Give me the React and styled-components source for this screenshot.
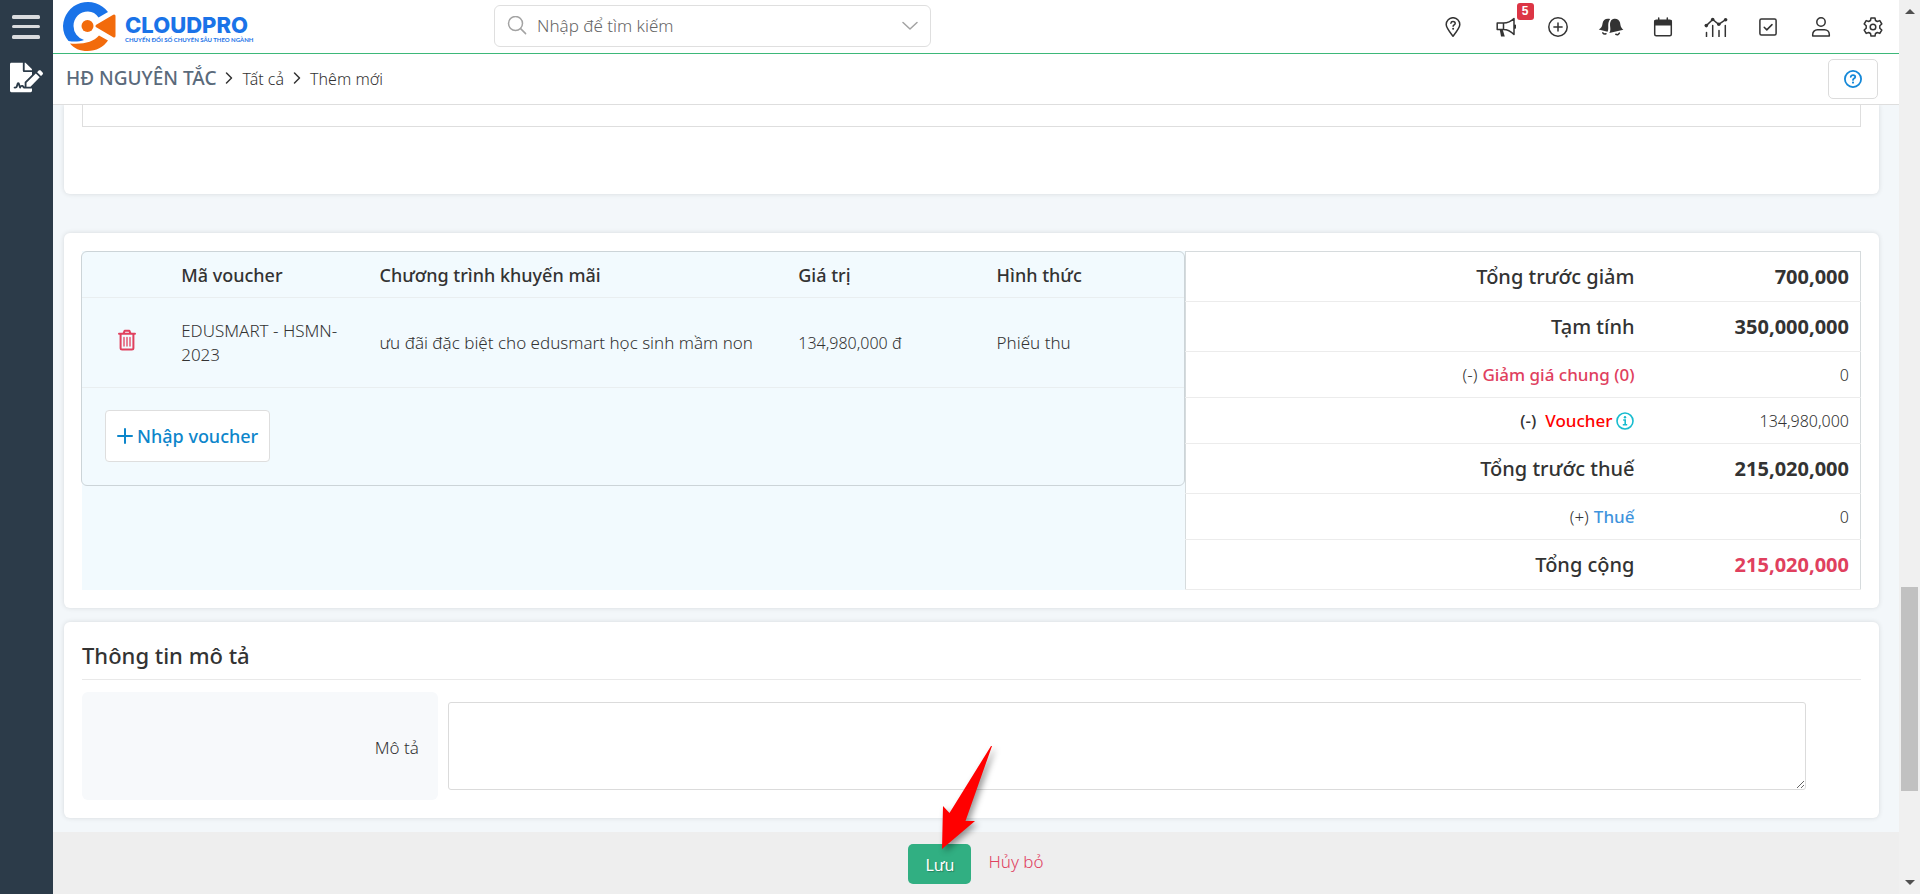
import React from 'react';
import styled, { createGlobalStyle } from 'styled-components';
import { FaFileSignature } from 'react-icons/fa';

const GlobalStyle = createGlobalStyle`
  *, *::before, *::after {
    box-sizing: border-box;
  }

  body {
    margin: 0;
    color: #333333;
    font-family: 'Noto Sans', 'Open Sans', sans-serif;
    font-size: 16px;
    line-height: 24px;
  }

  button, input, textarea {
    font: inherit;
  }

  a {
    text-decoration: none;
  }
`;

const Page = styled.div`
  display: flex;
  height: 100vh;
  overflow: hidden;
  background-color: #f3f7fa;
`;

const Sidebar = styled.nav`
  flex: 0 0 53px;
  display: flex;
  flex-direction: column;
  align-items: center;
  background-color: #2c3b49;
`;

const MenuButton = styled.button`
  display: flex;
  align-items: center;
  justify-content: center;
  width: 53px;
  height: 53px;
  padding: 0 1px 0 0;
  border: none;
  background: none;
  color: #d9dbde;
  cursor: pointer;
`;

const ModuleLink = styled.a`
  display: flex;
  justify-content: center;
  width: 53px;
  padding: 8px 0 0;
  color: #ffffff;
`;

const Main = styled.div`
  flex: 1;
  min-width: 0;
  display: flex;
  flex-direction: column;
`;

const Header = styled.header`
  flex: 0 0 54px;
  display: flex;
  align-items: center;
  background-color: #ffffff;
  border-bottom: 1px solid #3db879;
`;

const Logo = styled.a`
  flex: 0 0 441px;
  display: flex;
  align-items: center;
  gap: 9px;
  padding: 0 0 1px 9px;
  color: #1a73e8;
`;

const LogoText = styled.span`
  display: flex;
  flex-direction: column;
  padding-top: 6px;
`;

const LogoName = styled.span`
  font-family: Inter, sans-serif;
  font-size: 22px;
  line-height: 20px;
  font-weight: 800;
`;

const LogoSlogan = styled.span`
  font-family: Lato, sans-serif;
  font-size: 6px;
  line-height: 9px;
  font-weight: 700;
`;

const SearchBox = styled.label`
  flex: 0 1 437px;
  display: flex;
  align-items: center;
  height: 42px;
  padding: 0 12px;
  border: 1px solid #dfdfdf;
  border-radius: 6px;
  margin-bottom: 1px;
  color: #a3a3a3;
`;

const SearchInput = styled.input`
  flex: 1;
  min-width: 0;
  padding: 0 0 0 10px;
  border: none;
  outline: none;
  background: none;
  color: #333333;
  font-size: 17px;
  font-weight: 300;

  &::placeholder {
    color: #666666;
    opacity: 1;
  }
`;

const HeaderTools = styled.div`
  display: flex;
  justify-content: space-between;
  width: 448px;
  margin-left: auto;
  margin-right: 12px;
`;

const ToolButton = styled.button`
  position: relative;
  display: flex;
  align-items: center;
  justify-content: center;
  width: 28px;
  height: 28px;
  padding: 0;
  border: none;
  background: none;
  color: #333333;
  cursor: pointer;
`;

const Badge = styled.span`
  position: absolute;
  top: -10px;
  right: -14px;
  width: 17px;
  height: 17px;
  border-radius: 3px;
  background-color: #dc3545;
  color: #ffffff;
  font-family: 'Liberation Sans', Arial, sans-serif;
  font-size: 12px;
  line-height: 16px;
  font-weight: 700;
  text-align: center;
`;

const TitleBar = styled.div`
  flex: 0 0 51px;
  display: flex;
  align-items: center;
  justify-content: space-between;
  padding: 0 21px 0 13px;
  background-color: #ffffff;
  border-bottom: 1px solid #dedede;
`;

const Breadcrumb = styled.div`
  display: flex;
  align-items: center;
  gap: 9px;
  padding-bottom: 2px;
`;

const ModuleName = styled.a`
  color: #5a6a7b;
  font-size: 19px;
  font-weight: 500;
`;

const Crumb = styled.a`
  padding-top: 1px;
  color: #333333;
  font-weight: 300;
`;

const HelpButton = styled.button`
  display: flex;
  align-items: center;
  justify-content: center;
  width: 50px;
  height: 40px;
  border: 1px solid #dcdcdc;
  border-radius: 5px;
  background-color: #ffffff;
  color: #1488d8;
  cursor: pointer;
`;

const Content = styled.main`
  flex: 1;
  min-height: 0;
  padding: 0 20px 0 11px;
  overflow: hidden;
`;

const Card = styled.section`
  margin-bottom: ${props => props.$gap || 14}px;
  padding: 18px;
  border-radius: 6px;
  background-color: #ffffff;
  box-shadow: 0 0 5px rgba(0, 0, 0, 0.12);
`;

const ItemsCard = styled(Card)`
  padding: 0 18px 67px;
  border-radius: 0 0 6px 6px;
`;

const ItemsEnd = styled.div`
  height: 22px;
  border: 1px solid #dedede;
  border-top: none;
`;

const SummaryGrid = styled.div`
  display: grid;
  grid-template-columns: 62% 38%;
  align-items: start;
  background-color: #f2fafe;
`;

const VoucherPanel = styled.div`
  margin-left: -1px;
  border: 1px solid #ccd4d8;
  border-radius: 6px;
`;

const VoucherTable = styled.table`
  width: 100%;
  border-spacing: 0;
  table-layout: fixed;
`;

const VoucherHead = styled.th`
  width: ${props => props.$width};
  height: 46px;
  padding: 0 20px 0 0;
  border-bottom: 1px solid #e9eef0;
  font-size: 18px;
  font-weight: 500;
  text-align: left;
`;

const VoucherCell = styled.td`
  height: 90px;
  padding: 0 20px 0 0;
  border-bottom: 1px solid #e9eef0;
  font-size: ${props => (props.$number ? 16 : 17)}px;
  font-weight: 300;
`;

const ActionCell = styled(VoucherCell)`
  padding: 0 10px 0 0;
  text-align: center;
`;

const DeleteButton = styled.button`
  padding: 0;
  border: none;
  background: none;
  color: #e0405e;
  line-height: 0;
  cursor: pointer;
`;

const VoucherFooter = styled.td`
  padding: 22px 23px 23px;
`;

const AddVoucherButton = styled.button`
  display: flex;
  align-items: center;
  justify-content: center;
  gap: 4px;
  height: 52px;
  padding: 0 11px;
  border: 1px solid #dedede;
  border-radius: 4px;
  background-color: #ffffff;
  color: #0d86cb;
  font-size: 18px;
  font-weight: 500;
  cursor: pointer;
`;

const TotalsTable = styled.table`
  width: 100%;
  border: 1px solid #d6dbdd;
  border-collapse: collapse;
  background-color: #ffffff;
`;

const TotalsRow = styled.tr`
  height: ${props => (props.$strong ? 50 : 46)}px;
  border-bottom: 1px solid #ececec;
`;

const TotalsLabel = styled.th`
  padding: 0 10px;
  font-size: ${props => (props.$strong ? 20 : 17)}px;
  font-weight: ${props => (props.$strong ? 500 : 400)};
  text-align: right;
`;

const TotalsValue = styled.td`
  width: 32%;
  padding: 0 11px 0 10px;
  color: ${props => props.$color || '#333333'};
  font-size: ${props => (props.$strong ? 20 : 16)}px;
  font-weight: ${props => (props.$strong ? 700 : 300)};
  text-align: right;
`;

const TotalsLink = styled.a`
  display: inline-flex;
  align-items: center;
  gap: 4px;
  color: ${props => props.$color};
  font-weight: 500;
`;

const Sign = styled.span`
  margin-right: ${props => (props.$wide ? 9 : 5)}px;
  font-weight: ${props => (props.$wide ? 500 : 300)};
`;

const SectionTitle = styled.h2`
  margin: 0 0 12px;
  padding-bottom: 9px;
  border-bottom: 1px solid #e9e9e9;
  font-size: 22px;
  line-height: 30px;
  font-weight: 500;
`;

const FieldRow = styled.div`
  display: grid;
  grid-template-columns: 20% 80%;
`;

const FieldLabel = styled.label`
  display: flex;
  align-items: center;
  justify-content: flex-end;
  padding: 4px 19px 0 0;
  border-radius: 6px;
  background-color: #f7f9fb;
  font-size: 17px;
  font-weight: 300;
`;

const FieldValue = styled.div`
  padding: 10px 55px 10px 10px;
`;

const TextArea = styled.textarea`
  display: block;
  width: 100%;
  height: 88px;
  border: 1px solid #dbdbdb;
  border-radius: 3px;
  background-color: #ffffff;
  outline: none;
`;

const Footer = styled.footer`
  flex: 0 0 62px;
  display: flex;
  align-items: center;
  justify-content: center;
  gap: 17px;
  padding-top: 2px;
  background-color: #eeeeee;
`;

const SaveWrap = styled.div`
  position: relative;
`;

const SaveButton = styled.button`
  display: block;
  width: 63px;
  height: 40px;
  padding: 2px 0 0;
  border: none;
  border-radius: 5px;
  background-color: #31af82;
  color: #ffffff;
  text-shadow: 1px 1px 1px rgba(0, 0, 0, 0.25);
  cursor: pointer;
`;

const CancelLink = styled.a`
  padding-bottom: 4px;
  color: #e0405e;
  font-size: 17px;
  font-weight: 300;
`;

const Pointer = styled.svg`
  position: absolute;
  left: 28px;
  top: -102px;
  filter: drop-shadow(3px 3px 3px rgba(0, 0, 0, 0.4));
  pointer-events: none;
`;

const ScrollRail = styled.div`
  flex: 0 0 21px;
  display: flex;
  flex-direction: column;
  align-items: center;
  padding: 9px 0;
  background-color: #f0f0f0;
`;

const ScrollSpace = styled.div`
  flex: ${props => props.$size};
`;

const ScrollThumb = styled.div`
  flex: 204;
  width: 17px;
  background-color: #c1c1c1;
`;

const Icon = ({ size = 20, width, height, box = '0 0 20 20', children }) => (
  <svg
    width={width || size}
    height={height || size}
    viewBox={box}
    fill="none"
    stroke="currentColor"
    strokeWidth="1.5"
    strokeLinecap="round"
    strokeLinejoin="round"
    aria-hidden="true"
  >
    {children}
  </svg>
);

const tools = [
  {
    label: 'Check-in',
    icon: (
      <Icon>
        <path d="M10 19.2C7 15.3 3.2 10.8 3.2 7.5a6.8 6.8 0 0 1 13.6 0c0 3.3-3.8 7.800-6.800 11.700z" />
        <path d="M7.9 6.300c.1-1.100 1-1.700 2.100-1.700 1.200 0 2.200.700 2.200 1.800 0 1.500-2.100 1.500-2.100 2.900" />
        <circle cx="10.1" cy="11.800" r="1" fill="currentColor" stroke="none" />
      </Icon>
    ),
  },
  {
    label: 'Thông báo',
    badge: '5',
    icon: (
      <Icon>
        <path d="M1.2 6h6.300v6.600H1.200zM7.500 6c4 0 7.500-1.500 10.500-4.500v16c-3-3-6.500-4.900-10.500-4.900M19.300 8.300v2.600" />
        <path d="M3.800 13h3l2 6.500H5z" fill="currentColor" stroke="none" />
      </Icon>
    ),
  },
  {
    label: 'Thêm nhanh',
    icon: (
      <Icon>
        <circle cx="10" cy="10" r="9.200" />
        <path d="M10 5.900v8.200M5.900 10h8.200" />
      </Icon>
    ),
  },
  {
    label: 'Nhắc nhở',
    icon: (
      <Icon width={26} height={20} box="0 0 26 20">
        <path
          d="M12.200 2C8 .8 5 2.800 4.600 6.300 4.200 9.500 3.500 11 .8 12.500l8.700 2.300C11.500 11.300 8.600 6.500 12.200 2zM13.200 3.200C16.500.4 21 1.600 22 5.500c.6 3 .6 5 3.400 7.200L11.300 16c2.900-4-1.100-8.400 1.900-12.800z"
          fill="currentColor"
          stroke="none"
        />
        <path d="M4.800 15.800c.6 1 1.900 1.400 3.200 1M17.800 17.300c1.700.8 3.100.1 3.600-1.200" />
      </Icon>
    ),
  },
  {
    label: 'Lịch',
    icon: (
      <Icon>
        <rect x="1.7" y="3.3" width="16.6" height="15.5" rx="1.5" />
        <path d="M2 3.700h16v4H2z" fill="currentColor" />
        <path d="M5.700 1v3M14.300 1v3" />
      </Icon>
    ),
  },
  {
    label: 'Báo cáo',
    icon: (
      <Icon width={24} height={20} box="0 0 24 20">
        <path d="M2.300 8.600 8.700 2.500l6 4.800 6.900-4.600M2.500 15.500v4M8.700 8.500v11M15 13.500v6M21.300 8.500v11" />
        <g fill="currentColor" stroke="none">
          <circle cx="2.300" cy="8.600" r="1.800" />
          <circle cx="8.700" cy="2.500" r="1.800" />
          <circle cx="14.800" cy="7.300" r="1.800" />
          <circle cx="21.600" cy="2.700" r="1.800" />
        </g>
      </Icon>
    ),
  },
  {
    label: 'Công việc',
    icon: (
      <Icon>
        <rect x="1.9" y="1.9" width="16.2" height="16.2" rx="1.5" />
        <path d="m6.200 10.300 2.600 2.600 5.200-5.300" />
      </Icon>
    ),
  },
  {
    label: 'Tài khoản',
    icon: (
      <Icon>
        <circle cx="10" cy="5" r="4.200" />
        <path d="M1.700 19v-1.500c0-2.700 2-4.700 4.800-4.700h7c2.800 0 4.800 2 4.800 4.700V19z" />
      </Icon>
    ),
  },
  {
    label: 'Cài đặt',
    icon: (
      <Icon>
        <circle cx="10" cy="10" r="2.800" />
        <path d="M8 .9h4l.5 2.600 1.800 1 2.500-.9 2 3.400-2 1.800v2.400l2 1.800-2 3.400-2.500-.9-1.800 1-.5 2.600H8l-.5-2.600-1.800-1-2.500.9-2-3.400 2-1.800V8.800L1.200 7l2-3.400 2.500.9 1.800-1z" />
      </Icon>
    ),
  },
];

const vouchers = [
  {
    code: 'EDUSMART - HSMN-2023',
    program: 'ưu đãi đặc biệt cho edusmart học sinh mầm non',
    value: '134,980,000 đ',
    type: 'Phiếu thu',
  },
];

const Chevron = () => (
  <Icon width={8} height={14} box="0 0 8 14">
    <path d="m1.500 2 5 5-5 5" />
  </Icon>
);

const LogoMark = () => (
  <svg width="54" height="52" viewBox="0 0 54 52" aria-hidden="true">
    <path
      d="M46 12A25 25 0 0 0 1 26c0 6 2 11 5.500 15 6 1.200 11 .5 15.500-1A14.700 14.700 0 0 1 11.500 26c0-8.500 6.500-14.500 14.500-14.500 4.500 0 8 2 10.500 6z"
      fill="#1a73e8"
    />
    <path d="M8 43.500C12 48.500 18 51 25.500 51c8.500 0 16-4 20.500-10.500L37 35.500c-6 6.500-14.500 9-29 8z" fill="#f26b0c" />
    <circle cx="25.500" cy="26" r="6" fill="#f26b0c" />
    <path d="M35 26 52 16v20z" fill="#f26b0c" stroke="#f26b0c" strokeWidth="3" strokeLinejoin="round" />
  </svg>
);

const App = () => {
  return (
    <Page>
      <GlobalStyle />
      <Sidebar>
        <MenuButton aria-label="Menu">
          <svg width="28" height="24" viewBox="0 0 28 24" fill="currentColor" aria-hidden="true">
            <rect y="0" width="28" height="4" rx="1.500" />
            <rect y="10" width="28" height="3" rx="1.500" />
            <rect y="20" width="28" height="4" rx="1.500" />
          </svg>
        </MenuButton>
        <ModuleLink href="#" aria-label="HĐ nguyên tắc">
          <FaFileSignature size={33} />
        </ModuleLink>
      </Sidebar>

      <Main>
        <Header>
          <Logo href="#">
            <LogoMark />
            <LogoText>
              <LogoName>CLOUDPRO</LogoName>
              <LogoSlogan>CHUYỂN ĐỔI SỐ CHUYÊN SÂU THEO NGÀNH</LogoSlogan>
            </LogoText>
          </Logo>
          <SearchBox>
            <Icon>
              <circle cx="8.500" cy="7.500" r="7" />
              <path d="m13.600 12.600 5 5" />
            </Icon>
            <SearchInput type="text" placeholder="Nhập để tìm kiếm" aria-label="Tìm kiếm" />
            <Icon width={16} height={10} box="0 0 16 10">
              <path d="m1 1.500 7 6.500 7-6.500" />
            </Icon>
          </SearchBox>
          <HeaderTools>
            {tools.map(tool => (
              <ToolButton key={tool.label} aria-label={tool.label}>
                {tool.icon}
                {tool.badge && <Badge>{tool.badge}</Badge>}
              </ToolButton>
            ))}
          </HeaderTools>
        </Header>

        <TitleBar>
          <Breadcrumb>
            <ModuleName href="#">HĐ NGUYÊN TẮC</ModuleName>
            <Chevron />
            <Crumb href="#">Tất cả</Crumb>
            <Chevron />
            <Crumb href="#">Thêm mới</Crumb>
          </Breadcrumb>
          <HelpButton aria-label="Trợ giúp">
            <Icon size={18}>
              <g strokeWidth="2">
                <circle cx="10" cy="10" r="9" />
                <path d="M7.500 7.700c.2-1.300 1.200-2 2.500-2 1.400 0 2.500.8 2.500 2.100 0 1.700-2.500 1.800-2.500 3.200" />
              </g>
              <circle cx="10" cy="14" r="1.200" fill="currentColor" stroke="none" />
            </Icon>
          </HelpButton>
        </TitleBar>

        <Content>
          <ItemsCard $gap={39}>
            <ItemsEnd />
          </ItemsCard>

          <Card>
            <SummaryGrid>
              <VoucherPanel>
                <VoucherTable>
                  <thead>
                    <tr>
                      <VoucherHead $width="9%" aria-label="Thao tác" />
                      <VoucherHead $width="18%">Mã voucher</VoucherHead>
                      <VoucherHead $width="38%">Chương trình khuyến mãi</VoucherHead>
                      <VoucherHead $width="18%">Giá trị</VoucherHead>
                      <VoucherHead $width="17%">Hình thức</VoucherHead>
                    </tr>
                  </thead>
                  <tbody>
                    {vouchers.map(voucher => (
                      <tr key={voucher.code}>
                        <ActionCell>
                          <DeleteButton aria-label="Xóa voucher">
                            <Icon width={18} height={22} box="0 0 18 22">
                              <path
                                d="M1 4.700h16M5.500 4.500 6.700 1.700h4.600l1.200 2.800M2.600 5v14c0 .8.600 1.500 1.500 1.500h9.800c.9 0 1.500-.7 1.500-1.500V5"
                                strokeWidth="2"
                              />
                              <path d="M6 8.500v8.500M9 8.500v8.500M12 8.500v8.500" strokeWidth="1.300" />
                            </Icon>
                          </DeleteButton>
                        </ActionCell>
                        <VoucherCell>{voucher.code}</VoucherCell>
                        <VoucherCell>{voucher.program}</VoucherCell>
                        <VoucherCell $number>{voucher.value}</VoucherCell>
                        <VoucherCell>{voucher.type}</VoucherCell>
                      </tr>
                    ))}
                  </tbody>
                  <tfoot>
                    <tr>
                      <VoucherFooter colSpan={5}>
                        <AddVoucherButton>
                          <Icon size={16} box="0 0 16 16">
                            <path d="M8 1v14M1 8h14" strokeWidth="2" />
                          </Icon>
                          Nhập voucher
                        </AddVoucherButton>
                      </VoucherFooter>
                    </tr>
                  </tfoot>
                </VoucherTable>
              </VoucherPanel>

              <TotalsTable>
                <tbody>
                  <TotalsRow $strong>
                    <TotalsLabel $strong>Tổng trước giảm</TotalsLabel>
                    <TotalsValue $strong>700,000</TotalsValue>
                  </TotalsRow>
                  <TotalsRow $strong>
                    <TotalsLabel $strong>Tạm tính</TotalsLabel>
                    <TotalsValue $strong>350,000,000</TotalsValue>
                  </TotalsRow>
                  <TotalsRow>
                    <TotalsLabel>
                      <Sign>(-)</Sign>
                      <TotalsLink href="#" $color="#e0405e">Giảm giá chung (0)</TotalsLink>
                    </TotalsLabel>
                    <TotalsValue>0</TotalsValue>
                  </TotalsRow>
                  <TotalsRow>
                    <TotalsLabel>
                      <Sign $wide>(-)</Sign>
                      <TotalsLink href="#" $color="#ff0000">
                        Voucher
                        <svg width="18" height="18" viewBox="0 0 18 18" fill="none" stroke="#17bccf" strokeWidth="1.600" aria-hidden="true">
                          <circle cx="9" cy="9" r="8" />
                          <path d="M7.200 8h2v4.700M6.800 12.700h4.400" />
                          <circle cx="9" cy="5.200" r="1.200" fill="#17bccf" stroke="none" />
                        </svg>
                      </TotalsLink>
                    </TotalsLabel>
                    <TotalsValue>134,980,000</TotalsValue>
                  </TotalsRow>
                  <TotalsRow $strong>
                    <TotalsLabel $strong>Tổng trước thuế</TotalsLabel>
                    <TotalsValue $strong>215,020,000</TotalsValue>
                  </TotalsRow>
                  <TotalsRow>
                    <TotalsLabel>
                      <Sign>(+)</Sign>
                      <TotalsLink href="#" $color="#3f94dd">Thuế</TotalsLink>
                    </TotalsLabel>
                    <TotalsValue>0</TotalsValue>
                  </TotalsRow>
                  <TotalsRow $strong>
                    <TotalsLabel $strong>Tổng cộng</TotalsLabel>
                    <TotalsValue $strong $color="#e0405e">215,020,000</TotalsValue>
                  </TotalsRow>
                </tbody>
              </TotalsTable>
            </SummaryGrid>
          </Card>

          <Card>
            <SectionTitle>Thông tin mô tả</SectionTitle>
            <FieldRow>
              <FieldLabel htmlFor="description">Mô tả</FieldLabel>
              <FieldValue>
                <TextArea id="description" />
              </FieldValue>
            </FieldRow>
          </Card>
        </Content>

        <Footer>
          <SaveWrap>
            <SaveButton type="submit">Lưu</SaveButton>
            <Pointer width="60" height="110" viewBox="0 0 60 110" aria-hidden="true">
              <path d="M55 4 13.500 71 7 64 6 107l33-28H29.500L56 4z" fill="#ff0000" />
            </Pointer>
          </SaveWrap>
          <CancelLink href="#">Hủy bỏ</CancelLink>
        </Footer>
      </Main>

      <ScrollRail aria-hidden="true">
        <svg width="10" height="5" viewBox="0 0 10 5">
          <path d="M0 5 5 0l5 5z" fill="#505050" />
        </svg>
        <ScrollSpace $size={573} />
        <ScrollThumb />
        <ScrollSpace $size={89} />
        <svg width="10" height="5" viewBox="0 0 10 5">
          <path d="M0 0h10L5 5z" fill="#505050" />
        </svg>
      </ScrollRail>
    </Page>
  );
};

export default App;
